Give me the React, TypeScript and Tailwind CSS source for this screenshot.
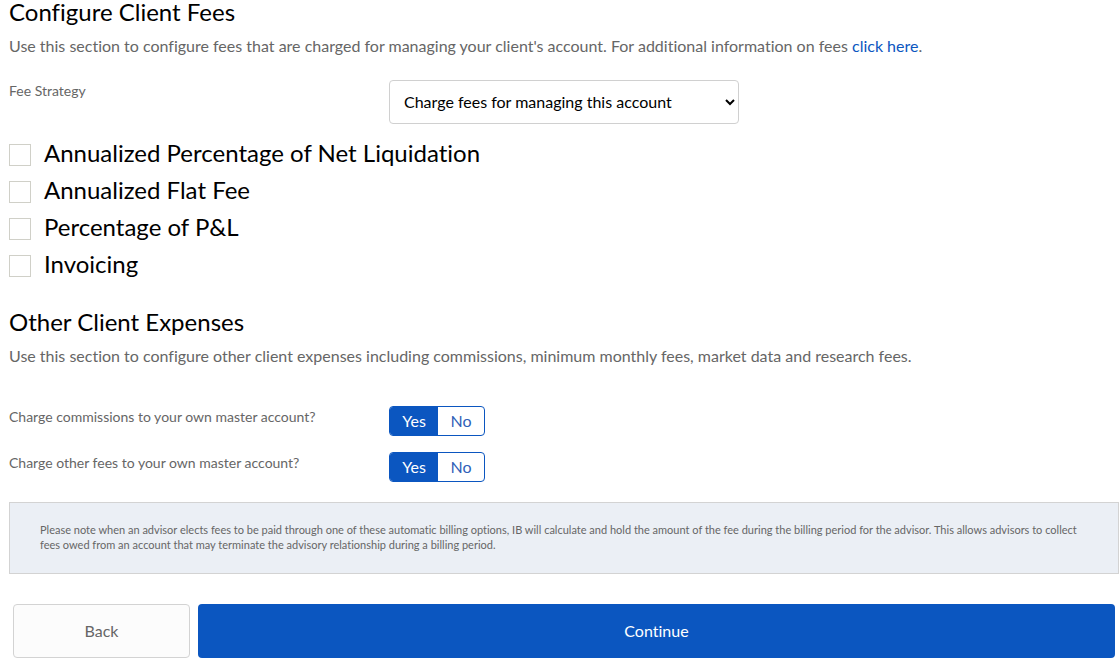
import { useState } from 'react';

const feeTypes = [
  'Annualized Percentage of Net Liquidation',
  'Annualized Flat Fee',
  'Percentage of P&L',
  'Invoicing',
];

type YesNoProps = {
  name: string;
  label: string;
};

function YesNo({ name, label }: YesNoProps) {
  const [value, setValue] = useState('Yes');

  return (
    <fieldset className="flex items-start">
      <legend className="float-left w-[380px] shrink-0 text-sm leading-[22px] text-[#666666]">{label}</legend>
      <div className="flex h-[30px] w-24 overflow-hidden rounded border border-[#0b56c0]">
        {['Yes', 'No'].map((option) => (
          <label
            key={option}
            className="flex grow cursor-pointer items-center justify-center text-base text-[#2f5fb8] has-checked:bg-[#0b56c0] has-checked:text-white"
          >
            <input
              type="radio"
              name={name}
              value={option}
              checked={value === option}
              onChange={() => setValue(option)}
              className="sr-only"
            />
            {option}
          </label>
        ))}
      </div>
    </fieldset>
  );
}

export default function App() {
  return (
    <main className="bg-white pr-px pl-[9px] font-['Lato',sans-serif] text-black [font-variant-ligatures:none]">
      <section>
        <h2 className="text-2xl leading-6">Configure Client Fees</h2>
        <p className="mt-[10px] text-base leading-6 text-[#666666]">
          Use this section to configure fees that are charged for managing your client's account. For
          additional information on fees{' '}
          <a href="#fees" className="text-[#0b56c0]">
            click here
          </a>
          .
        </p>

        <div className="mt-[22px] flex items-start">
          <label htmlFor="fee-strategy" className="w-[380px] shrink-0 text-sm leading-[22px] text-[#666666]">
            Fee Strategy
          </label>
          <select
            id="fee-strategy"
            className="h-11 w-[350px] rounded border border-[#d0d0d0] bg-white pb-[2px] pl-[10px] text-base"
          >
            <option>Charge fees for managing this account</option>
            <option>Do not charge fees</option>
          </select>
        </div>

        <div className="mt-[10px] flex flex-col">
          {feeTypes.map((fee) => (
            <label key={fee} className="flex h-[37px] items-center gap-[13px] text-2xl leading-6">
              <input
                type="checkbox"
                className="mt-1 size-[22px] shrink-0 appearance-none border border-[#d0d0c8] bg-white checked:bg-[#0b56c0]"
              />
              {fee}
            </label>
          ))}
        </div>
      </section>

      <section className="mt-7">
        <h2 className="text-2xl leading-6">Other Client Expenses</h2>
        <p className="mt-[10px] text-base leading-6 text-[#666666]">
          Use this section to configure other client expenses including commissions, minimum monthly
          fees, market data and research fees.
        </p>
        <div className="mt-[38px] flex flex-col gap-4">
          <YesNo name="commissions" label="Charge commissions to your own master account?" />
          <YesNo name="other-fees" label="Charge other fees to your own master account?" />
        </div>
      </section>

      <p className="mt-5 border border-[#d3d3d3] bg-[#ebeff5] px-[30px] pt-[19px] pb-[21px] text-[11px] leading-[15px] text-[#666666]">
        Please note when an advisor elects fees to be paid through one of these automatic billing
        options, IB will calculate and hold the amount of the fee during the billing period for the
        advisor. This allows advisors to collect fees owed from an account that may terminate the
        advisory relationship during a billing period.
      </p>

      <div className="mt-[30px] flex gap-2 px-1 pb-1">
        <button
          type="button"
          className="h-[54px] w-[177px] shrink-0 rounded border border-[#d3d3d3] bg-[#fcfcfc] text-base text-[#666666]"
        >
          Back
        </button>
        <button type="button" className="h-[54px] grow rounded bg-[#0b56c0] text-base text-white">
          Continue
        </button>
      </div>
    </main>
  );
}
